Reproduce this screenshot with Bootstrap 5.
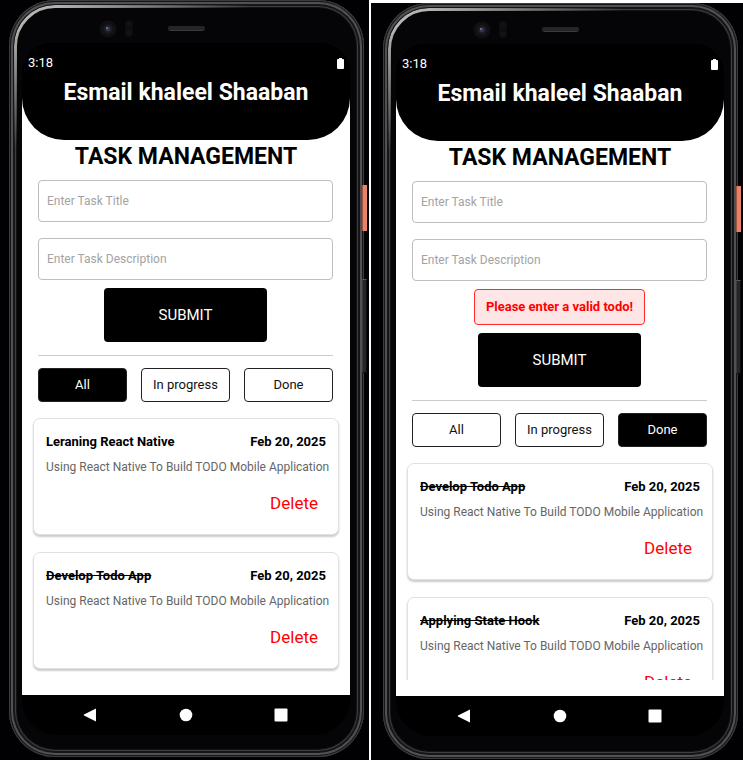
<!DOCTYPE html>
<html lang="en">
<head>
<meta charset="utf-8">
<meta name="viewport" content="width=device-width, initial-scale=1">
<title>Task Management</title>
<link href="https://cdn.jsdelivr.net/npm/bootstrap@5.3.0/dist/css/bootstrap.min.css" rel="stylesheet">
<style>
  body { font-family: Roboto, "Liberation Sans", sans-serif; font-size: 12px; line-height: 16px; color: #000; background: #fff; gap: 2px; }
  .stage { flex: 1 1 0; min-width: 0; background: #010103; }
  .stage-a { padding: 0 5px 3px 9px; }
  .stage-b { padding: 0 5px 1px 12px; margin-top: 3px; }
  /* phone shell: concentric metal rims around the glass */
  .phone { padding: 43px 14px 22px 13px; border-radius: 46px; background: #050507;
    box-shadow: inset 0 0 0 1px #3c3c3e, inset 0 0 0 2px #161618, inset 0 0 0 4px #505154, inset 0 0 0 6px #161618, inset 0 0 0 7px #3e3e40, inset 0 0 0 8px #141416; }
  .stage-b .phone { padding-top: 41px; padding-bottom: 23px; }
  .phone::before { content: ""; position: absolute; inset: 5px; border: 3px solid #b4b4b0; border-radius: 41px; pointer-events: none;
    -webkit-mask-image: radial-gradient(ellipse 240px 150px at 20px 10px, #000 10%, transparent 90%); mask-image: radial-gradient(ellipse 240px 150px at 20px 10px, #000 10%, transparent 90%); }
  .sensors { position: absolute; top: 18px; left: 88px; }
  .stage-b .sensors { top: 16px; }
  .side-key { position: absolute; right: -4px; width: 5px; }
  .key-power { top: 185px; height: 46px; background: #e8836b; border-left: 1px solid #a3543f; }
  .key-volume { top: 279px; height: 94px; background: #262627; border: 1px solid #0c0c0d; border-top-color: #58585a; border-left-color: #3a3a3c; }
  .stage-b .key-power { top: 183px; }
  .stage-b .key-volume { top: 277px; }
  .side-key { right: -3px; }
  .screen { background: linear-gradient(#000 50px, #fff 50px, #fff calc(100% - 40px), #000 calc(100% - 40px)); border-radius: 30px 30px 36px 36px; overflow: hidden; min-height: 0; }
  .app-head { background: #000; color: #fff; border-radius: 0 0 42px 42px; padding: 12px 6px 31px; }
  .clock { font-size: 13px; }
  .owner { font-size: 23px; line-height: 32px; font-weight: 700; padding-top: 6px; }
  .heading { font-size: 23px; line-height: 32px; font-weight: 700; margin: 1px 0 7px; }
  .pad { padding: 0 17px 0 16px; }
  .field { height: 42px; border: 1px solid #bdbdbd; border-radius: 4px; padding: 0 8px; font-size: 12px; color: #000; }
  .field::placeholder { color: #a3a3a3; }
  .submit { height: 54px; font-size: 15px; border-radius: 4px; background: #000; color: #fff; border: 0; padding: 0 55px; }
  .alert-box { border: 1px solid #ff2a2a; border-radius: 4px; background: #ffe6e6; color: #f00; font-size: 13px; line-height: 20px; font-weight: 700; padding: 7px 11px; }
  .rule { border-top: 1px solid #ccc; opacity: 1; margin: 13px 0 12px; }
  .filters { gap: 14px; }
  .filter { flex: 1 1 0; height: 34px; border: 1px solid #222; border-radius: 4px; background: #fff; color: #111; font-size: 13px; padding: 0; white-space: nowrap; }
  .filter.on { background: #000; color: #fff; }
  .tasks { flex: 1 1 0; min-height: 0; overflow: hidden; padding: 16px 11px 0; margin-bottom: 16px; gap: 16px; }
  .task { flex: none; border: 1px solid #e0e0e0; border-radius: 7px; padding: 14px 12px 19px; background: #fff; box-shadow: 0 2px 2px #ccc; }
  .task + .task { margin-top: 1px; }
  .task-name { font-size: 13px; line-height: 18px; font-weight: 700; margin: 0; }
  .task-text { color: #666; margin: 8px 0 16px; white-space: nowrap; }
  .remove { font-size: 17px; line-height: 24px; color: #f00; border: 0; background: none; padding: 0 8px 0 0; }
  .sysbar { background: #000; height: 40px; flex: none; padding: 0 62px 0 61px; }
  .sysbar button { border: 0; background: none; padding: 0; line-height: 0; }
</style>
</head>
<body class="d-flex vh-100 overflow-hidden">

<main class="stage stage-a d-flex flex-column">
  <div class="phone position-relative d-flex flex-column flex-fill">
    <svg class="sensors" width="110" height="22" viewBox="0 0 110 22" aria-hidden="true">
      <circle cx="11" cy="11" r="8.500" fill="#101013"/><circle cx="11" cy="11" r="5" fill="#191a20"/><circle cx="11" cy="11" r="2.500" fill="#30364e"/><circle cx="10" cy="10" r="1" fill="#777c91"/>
      <rect x="28" y="2" width="8" height="17" rx="4" fill="#0d0d10"/><circle cx="32" cy="6" r="3" fill="#121216"/><circle cx="32" cy="15" r="3" fill="#121216"/>
      <rect x="71" y="8" width="37" height="5" rx="2" fill="#252527"/><path d="M73 12.500h33" stroke="#3a3a3c"/>
    </svg>
    <span class="side-key key-power"></span><span class="side-key key-volume"></span>
    <div class="screen d-flex flex-column flex-fill">
      <header class="app-head">
        <div class="clock d-flex justify-content-between align-items-center"><span>3:18</span>
          <svg width="7" height="11" viewBox="0 0 7 11" fill="#fff" aria-hidden="true"><path d="M2 0h3v1h1a1 1 0 0 1 1 1v8a1 1 0 0 1-1 1H1a1 1 0 0 1-1-1V2a1 1 0 0 1 1-1h1z"/></svg></div>
        <h1 class="owner text-center mb-0">Esmail khaleel Shaaban</h1>
      </header>
      <h2 class="heading text-center">TASK MANAGEMENT</h2>
      <form class="pad d-flex flex-column">
        <input class="field w-100 mb-3" type="text" placeholder="Enter Task Title" aria-label="Enter Task Title">
        <input class="field w-100 mb-2" type="text" placeholder="Enter Task Description" aria-label="Enter Task Description">
        <button class="submit align-self-center" type="button">SUBMIT</button>
      </form>
      <div class="pad">
        <hr class="rule">
        <div class="filters d-flex">
          <button class="filter on" type="button">All</button><button class="filter" type="button">In progress</button><button class="filter" type="button">Done</button>
        </div>
      </div>
      <section class="tasks d-flex flex-column">
        <article class="task d-flex flex-column">
          <div class="d-flex justify-content-between"><h3 class="task-name">Leraning React Native</h3><time class="task-name">Feb 20, 2025</time></div>
          <p class="task-text">Using React Native To Build TODO Mobile Application</p>
          <button class="remove align-self-end" type="button">Delete</button>
        </article>
        <article class="task d-flex flex-column">
          <div class="d-flex justify-content-between"><h3 class="task-name text-decoration-line-through">Develop Todo App</h3><time class="task-name">Feb 20, 2025</time></div>
          <p class="task-text">Using React Native To Build TODO Mobile Application</p>
          <button class="remove align-self-end" type="button">Delete</button>
        </article>
      </section>
      <nav class="sysbar d-flex justify-content-between align-items-center" aria-label="System">
        <button type="button" aria-label="Back"><svg width="14" height="14" viewBox="0 0 14 14" fill="#fff"><path d="M13 0.500v13L1 7.600q-.8-.6 0-1.200z"/></svg></button>
        <button type="button" aria-label="Home"><svg width="14" height="14" viewBox="0 0 14 14" fill="#fff"><circle cx="7" cy="7" r="6.300"/></svg></button>
        <button type="button" aria-label="Recent"><svg width="14" height="14" viewBox="0 0 14 14" fill="#fff"><rect x=".5" y=".5" width="13" height="13" rx="1"/></svg></button>
      </nav>
    </div>
  </div>
</main>

<section class="stage stage-b d-flex flex-column">
  <div class="phone position-relative d-flex flex-column flex-fill">
    <svg class="sensors" width="110" height="22" viewBox="0 0 110 22" aria-hidden="true">
      <circle cx="11" cy="11" r="8.500" fill="#101013"/><circle cx="11" cy="11" r="5" fill="#191a20"/><circle cx="11" cy="11" r="2.500" fill="#30364e"/><circle cx="10" cy="10" r="1" fill="#777c91"/>
      <rect x="28" y="2" width="8" height="17" rx="4" fill="#0d0d10"/><circle cx="32" cy="6" r="3" fill="#121216"/><circle cx="32" cy="15" r="3" fill="#121216"/>
      <rect x="71" y="8" width="37" height="5" rx="2" fill="#252527"/><path d="M73 12.500h33" stroke="#3a3a3c"/>
    </svg>
    <span class="side-key key-power"></span><span class="side-key key-volume"></span>
    <div class="screen d-flex flex-column flex-fill">
      <header class="app-head">
        <div class="clock d-flex justify-content-between align-items-center"><span>3:18</span>
          <svg width="7" height="11" viewBox="0 0 7 11" fill="#fff" aria-hidden="true"><path d="M2 0h3v1h1a1 1 0 0 1 1 1v8a1 1 0 0 1-1 1H1a1 1 0 0 1-1-1V2a1 1 0 0 1 1-1h1z"/></svg></div>
        <h1 class="owner text-center mb-0">Esmail khaleel Shaaban</h1>
      </header>
      <h2 class="heading text-center">TASK MANAGEMENT</h2>
      <form class="pad d-flex flex-column">
        <input class="field w-100 mb-3" type="text" placeholder="Enter Task Title" aria-label="Enter Task Title">
        <input class="field w-100 mb-2" type="text" placeholder="Enter Task Description" aria-label="Enter Task Description">
        <div class="alert-box align-self-center mb-2" role="alert">Please enter a valid todo!</div>
        <button class="submit align-self-center" type="button">SUBMIT</button>
      </form>
      <div class="pad">
        <hr class="rule">
        <div class="filters d-flex">
          <button class="filter" type="button">All</button><button class="filter" type="button">In progress</button><button class="filter on" type="button">Done</button>
        </div>
      </div>
      <section class="tasks d-flex flex-column">
        <article class="task d-flex flex-column">
          <div class="d-flex justify-content-between"><h3 class="task-name text-decoration-line-through">Develop Todo App</h3><time class="task-name">Feb 20, 2025</time></div>
          <p class="task-text">Using React Native To Build TODO Mobile Application</p>
          <button class="remove align-self-end" type="button">Delete</button>
        </article>
        <article class="task d-flex flex-column">
          <div class="d-flex justify-content-between"><h3 class="task-name text-decoration-line-through">Applying State Hook</h3><time class="task-name">Feb 20, 2025</time></div>
          <p class="task-text">Using React Native To Build TODO Mobile Application</p>
          <button class="remove align-self-end" type="button">Delete</button>
        </article>
      </section>
      <nav class="sysbar d-flex justify-content-between align-items-center" aria-label="System">
        <button type="button" aria-label="Back"><svg width="14" height="14" viewBox="0 0 14 14" fill="#fff"><path d="M13 0.500v13L1 7.600q-.8-.6 0-1.200z"/></svg></button>
        <button type="button" aria-label="Home"><svg width="14" height="14" viewBox="0 0 14 14" fill="#fff"><circle cx="7" cy="7" r="6.300"/></svg></button>
        <button type="button" aria-label="Recent"><svg width="14" height="14" viewBox="0 0 14 14" fill="#fff"><rect x=".5" y=".5" width="13" height="13" rx="1"/></svg></button>
      </nav>
    </div>
  </div>
</section>

<script src="https://cdn.jsdelivr.net/npm/bootstrap@5.3.0/dist/js/bootstrap.bundle.min.js"></script>
</body>
</html>
